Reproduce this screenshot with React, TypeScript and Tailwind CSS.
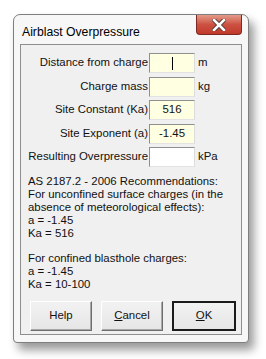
import React from 'react';

const font = { fontFamily: '"Liberation Sans", Arial, sans-serif' };

function Field({
  label,
  value,
  unit,
  yellow = true,
  caret = false,
  className = '',
}: {
  label: string;
  value?: string;
  unit?: string;
  yellow?: boolean;
  caret?: boolean;
  className?: string;
}) {
  return (
    <div className={`flex items-center h-[20px] ${className}`}>
      <span className="w-[128px] text-right pr-[1px] text-[11.4px] text-[#111]">{label}</span>
      <div
        className={`relative w-[46px] h-[20px] border border-t-[#8e8f8f] border-l-[#8e8f8f] border-r-[#dcdcdc] border-b-[#e3e3e3] flex items-center justify-center text-[11.4px] text-[#111] ${
          yellow ? 'bg-[#ffffe1]' : 'bg-white'
        }`}
      >
        {value}
        {caret && <div className="w-[1px] h-[13px] bg-black" />}
      </div>
      <span className="pl-[3px] text-[11.4px] text-[#111]">{unit}</span>
    </div>
  );
}

function Button({ children, isDefault = false }: { children: React.ReactNode; isDefault?: boolean }) {
  return (
    <div
      className={`h-[30px] flex items-center justify-center text-[11.4px] text-[#111] bg-gradient-to-b from-[#f2f2f2] to-[#e6e6e6] ${
        isDefault
          ? 'w-[64px] border-2 border-[#1b1b1b]'
          : 'w-[62px] border border-t-[#ffffff] border-l-[#ffffff] border-r-[#6e6e6e] border-b-[#6e6e6e] shadow-[inset_-1px_-1px_0_#a8a8a8]'
      }`}
    >
      {children}
    </div>
  );
}

export default function App() {
  return (
    <div className="w-[266px] h-[359px] bg-white pl-[13px] pt-[14px]" style={font}>
      <div className="w-[236px] h-[329px] bg-[#f7f7f7] border border-[#7e7e7e] rounded-t-[7px] rounded-b-[4px] shadow-[5px_7px_10px_rgba(0,0,0,0.4)] flex flex-col">
        {/* title bar */}
        <div className="h-[29px] flex items-start justify-between">
          <span className="ml-[8px] mt-[8px] text-[12.2px] text-black">Airblast Overpressure</span>
          <div className="mr-[6px] w-[46px] h-[20px] rounded-b-[4px] border border-t-0 border-[#7a2a22] bg-gradient-to-b from-[#e39a8a] via-[#cc5142] to-[#c2392a] flex items-center justify-center">
            <svg width="14" height="12" viewBox="0 0 14 12">
              <path
                d="M2 1 L12 11 M12 1 L2 11"
                stroke="#4a3532"
                strokeWidth="4.4"
                strokeLinecap="square"
              />
              <path
                d="M2 1 L12 11 M12 1 L2 11"
                stroke="#ffffff"
                strokeWidth="2.6"
                strokeLinecap="square"
              />
            </svg>
          </div>
        </div>
        {/* client */}
        <div className="ml-[6px] w-[222px] h-[291px] bg-[#f0f0f0] border border-[#8e8e8e] flex flex-col">
          <Field className="mt-[8px]" label="Distance from charge" unit="m" caret />
          <Field className="mt-[4px]" label="Charge mass" unit="kg" />
          <Field className="mt-[3px]" label="Site Constant (Ka)" value="516" />
          <Field className="mt-[4px]" label="Site Exponent (a)" value="-1.45" />
          <Field className="mt-[3px]" label="Resulting Overpressure" unit="kPa" yellow={false} />
          <div className="mt-[8px] ml-[7px] text-[11.4px] leading-[12.9px] text-[#111]">
            <div>AS 2187.2 - 2006 Recommendations:</div>
            <div>For unconfined surface charges (in the</div>
            <div>absence of meteorological effects):</div>
            <div>a = -1.45</div>
            <div>Ka = 516</div>
            <div className="h-[12.9px]" />
            <div>For confined blasthole charges:</div>
            <div>a = -1.45</div>
            <div>Ka = 10-100</div>
          </div>
          <div className="mt-auto mb-[3px] ml-[9px] flex gap-[9px]">
            <Button>Help</Button>
            <Button>
              <span>
                <u>C</u>ancel
              </span>
            </Button>
            <Button isDefault>
              <span>
                <u>O</u>K
              </span>
            </Button>
          </div>
        </div>
      </div>
    </div>
  );
}
